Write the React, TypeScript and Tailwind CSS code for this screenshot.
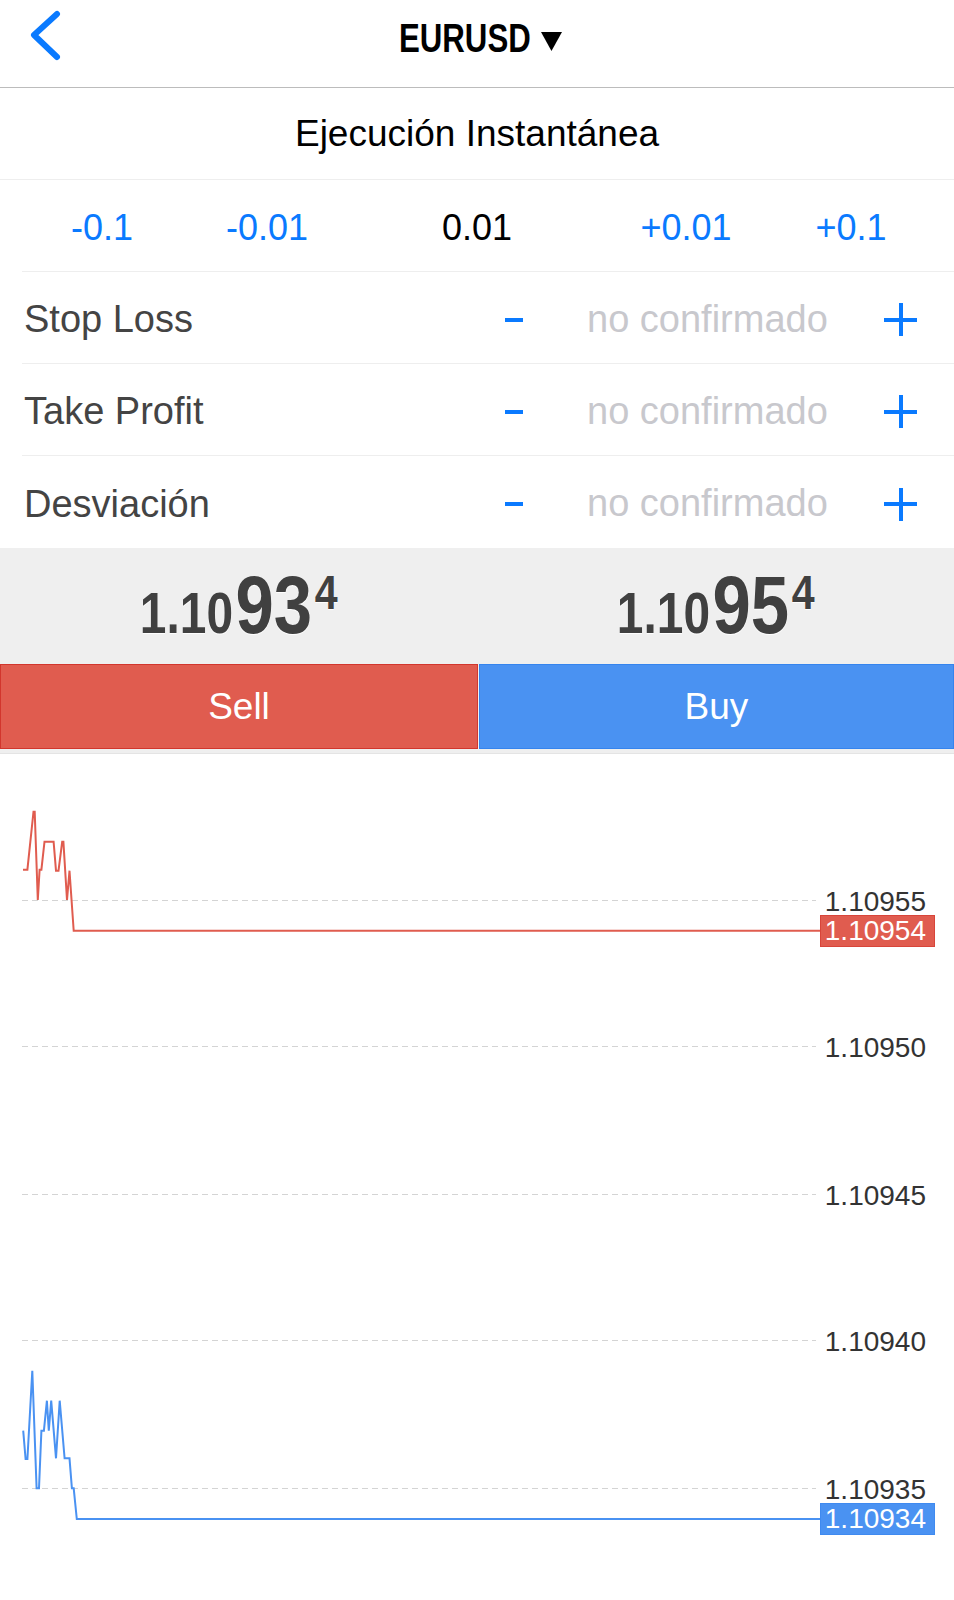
import React from "react";

const sans = { fontFamily: '"Liberation Sans", Arial, sans-serif' };

const rows = ["Stop Loss", "Take Profit", "Desviación"];

const gridLevels = [
  { y: 146, label: "1.10955" },
  { y: 292, label: "1.10950" },
  { y: 440, label: "1.10945" },
  { y: 586, label: "1.10940" },
  { y: 734, label: "1.10935" },
];

const redPts =
  "23,115.7 27.4,115.7 33.5,57.7 34.7,57.7 37.8,146 39.6,115.7 41.4,115.7 44.5,87.7 53.6,87.7 56,116.7 58.5,116.7 62.2,87.7 63.4,87.7 67,146 69.5,116.7 73.7,176.7 820,176.7";
const bluePts =
  "23.2,676.7 25.6,705 27.4,705 32.3,616.7 36.6,734.3 39,734.3 41.4,676.7 43.9,676.7 46.9,646.7 48.8,676.7 51.2,646.7 56,704.3 59.7,646.7 64.6,704.3 69.5,704.3 71.9,734.3 73.7,734.3 76.8,765 820,765";

function Price({ main, big, sup }: { main: string; big: string; sup: string }) {
  return (
    <div className="flex flex-1 justify-center">
      <div
        className="flex items-baseline text-[#404040] font-bold scale-x-[0.84] origin-center"
        style={{ textShadow: "0 1px 1px #ffffff" }}
      >
        <span className="text-[57px] leading-none">{main}</span>
        <span className="text-[82px] leading-none ml-[3px]">{big}</span>
        <span className="text-[49px] leading-none self-start mt-[4px] ml-[3px]">{sup}</span>
      </div>
    </div>
  );
}

export default function App() {
  return (
    <div className="w-[954px] h-[1600px] bg-white overflow-hidden" style={sans}>
      {/* Nav bar */}
      <div className="relative h-[88px] border-b border-[#bcbcbc] flex items-center justify-center">
        <svg className="absolute left-[28px] top-[10px]" width="36" height="52" viewBox="0 0 36 52">
          <polyline
            points="29,4 6,25 29,47"
            fill="none"
            stroke="#0a7aff"
            strokeWidth="6"
            strokeLinecap="round"
            strokeLinejoin="round"
          />
        </svg>
        <div className="flex items-end gap-[13px] ml-[6px] mt-[-12px] scale-x-[0.78] origin-center">
          <span className="text-[40px] font-bold leading-none text-black">EURUSD</span>
          <svg width="27" height="19" viewBox="0 0 27 19" className="mb-[7px]">
            <polygon points="0,0 27,0 13.5,19" fill="#000" />
          </svg>
        </div>
      </div>

      {/* Execution type */}
      <div className="h-[92px] border-b border-[#eeeeee] flex items-center justify-center">
        <span className="text-[37px] text-black">Ejecución Instantánea</span>
      </div>

      {/* Lot size */}
      <div className="ml-[22px] h-[92px] border-b border-[#eeeeee] grid grid-cols-[160px_170px_250px_168px_162px] items-center pt-[4px] text-[36px]">
        <span className="text-center text-[#0a7aff]">-0.1</span>
        <span className="text-center text-[#0a7aff]">-0.01</span>
        <span className="text-center text-black">0.01</span>
        <span className="text-center text-[#0a7aff]">+0.01</span>
        <span className="text-center text-[#0a7aff]">+0.1</span>
      </div>

      {/* SL / TP / Deviation */}
      {rows.map((label, i) => (
        <div
          key={label}
          className={`ml-[22px] h-[92px] flex items-center ${i < 2 ? "border-b border-[#eeeeee]" : ""}`}
        >
          <span className="flex-1 pl-[2px] pt-[4px] text-[38px] text-[#444444]">{label}</span>
          <div className="flex items-center mt-[4px]">
            <div className="w-[18px] h-[4px] bg-[#0a7aff]" />
            <span className="ml-[64px] w-[240px] whitespace-nowrap text-[38px] text-[#c8c8cd] leading-none mt-[-2px]">
              no confirmado
            </span>
            <div className="relative ml-[57px] mr-[37px] w-[33px] h-[33px]">
              <div className="absolute left-0 top-[14.5px] w-[33px] h-[4px] bg-[#0a7aff]" />
              <div className="absolute top-0 left-[14.5px] w-[4px] h-[33px] bg-[#0a7aff]" />
            </div>
          </div>
        </div>
      ))}

      {/* Prices */}
      <div className="h-[116px] bg-[#efefef] flex pt-[16px]">
        <Price main="1.10" big="93" sup="4" />
        <Price main="1.10" big="95" sup="4" />
      </div>

      {/* Sell / Buy */}
      <div className="flex h-[85px] bg-[#efefef]">
        <button className="w-[478px] bg-[#e05c4f] border border-[#d2362d] text-white text-[37px] flex items-center justify-center">
          Sell
        </button>
        <button className="flex-1 ml-[1px] bg-[#4a92f2] border border-[#3584ee] text-white text-[37px] flex items-center justify-center">
          Buy
        </button>
      </div>
      <div className="h-[5px] bg-[#efefef] border-b border-[#e4e4e4]" />

      {/* Chart */}
      <div className="relative h-[845px]">
        <svg className="absolute left-0 top-0" width="954" height="845" viewBox="0 0 954 845">
          {gridLevels.map((g) => (
            <line
              key={g.label}
              x1="22"
              x2="816"
              y1={g.y + 0.5}
              y2={g.y + 0.5}
              stroke="#d4d4d4"
              strokeWidth="1"
              strokeDasharray="6 4"
            />
          ))}
          <polyline points={redPts} fill="none" stroke="#e05c4f" strokeWidth="2" strokeLinejoin="miter" />
          <polyline points={bluePts} fill="none" stroke="#4a92f2" strokeWidth="2" strokeLinejoin="miter" />
        </svg>
        {gridLevels.map((g) => (
          <div
            key={g.label}
            className="absolute right-[28px] h-[32px] leading-[32px] text-[28px] text-[#333333]"
            style={{ top: g.y - 14 }}
          >
            {g.label}
          </div>
        ))}
        <div className="absolute left-[820px] top-[161px] w-[115px] h-[32px] bg-[#e05c4f] border border-[#d8453a] text-white text-[28px] leading-[30px] text-right pr-[8px]">
          1.10954
        </div>
        <div className="absolute left-[820px] top-[749px] w-[115px] h-[32px] bg-[#4a92f2] border border-[#3f8af0] text-white text-[28px] leading-[30px] text-right pr-[8px]">
          1.10934
        </div>
      </div>
    </div>
  );
}
